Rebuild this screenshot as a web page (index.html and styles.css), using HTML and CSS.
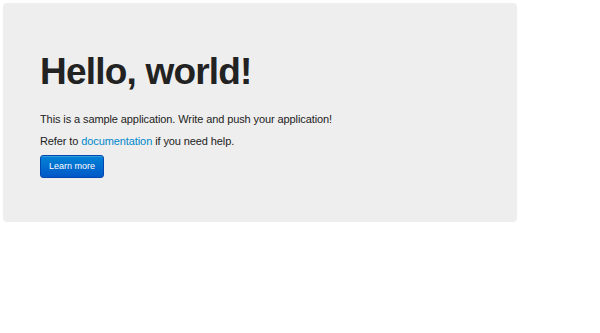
FILE: index.html
```html
<!DOCTYPE html>
<html>
<head>
<meta charset="utf-8">
<title>Hello, world!</title>
<link rel="stylesheet" href="styles.css">
</head>
<body>
<div class="container">
  <div class="hero-unit">
    <h1>Hello, world!</h1>
    <p>This is a sample application. Write and push your application!</p>
    <p>Refer to <a href="#">documentation</a> if you need help.</p>
    <p><a class="btn btn-primary" href="#">Learn more</a></p>
  </div>
</div>
</body>
</html>
```

FILE: styles.css
```css
body {
	margin		: 0;
	background-color: white;
	font-family	: "Liberation Sans", Arial, sans-serif;
	color		: #222;
}
.container {
	padding		: 3px;
	width		: 514px;
}
.hero-unit {
	background-color: #eee;
	border-radius	: 4px;
	padding		: 37px 37px 40px;
	height		: 142px;
}
.hero-unit h1 {
	margin		: 13px 0 21px;
	font-size	: 37px;
	line-height	: 1;
	letter-spacing	: -0.8px;
	font-weight	: bold;
	color		: #222;
}
.hero-unit p {
	margin		: 0 0 6px;
	font-size	: 11px;
	line-height	: 16px;
	letter-spacing	: -0.1px;
}
a {	color		: #0088cc; text-decoration: none; }
.btn {
	display		: inline-block;
	padding		: 4px 8px;
	font-size	: 9px;
	line-height	: 13px;
	letter-spacing	: 0;
	color		: white;
	border-radius	: 3px;
	border		: 1px solid #0048b0;
	background-image: linear-gradient(to bottom, #0083d6, #0058c8);
	box-shadow	: inset 0 1px 0 rgba(255,255,255,0.2);
}
```
